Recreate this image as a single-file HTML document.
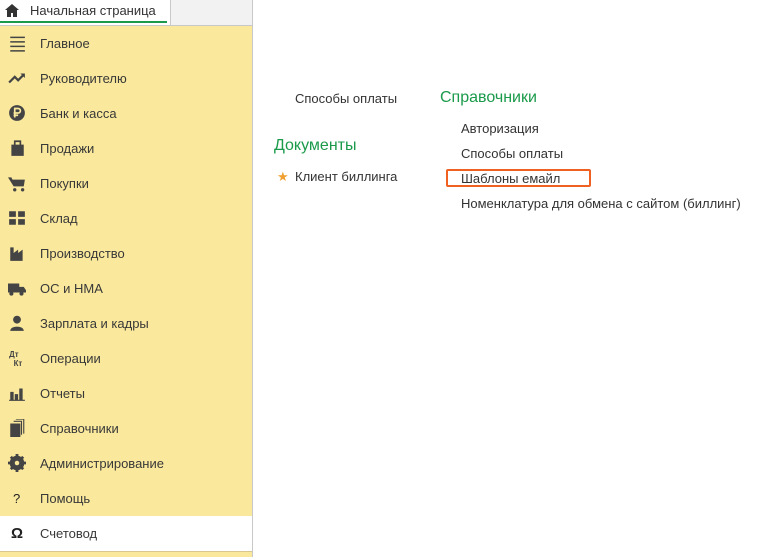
<!DOCTYPE html>
<html><head><meta charset="utf-8"><style>
*{margin:0;padding:0;box-sizing:border-box}
body{width:772px;height:557px;background:#fff;font-family:"Liberation Sans",sans-serif;font-size:13px;color:#404040;position:relative;overflow:hidden}
.top{position:absolute;left:0;top:0;width:253px;height:26px;background:#f2f2f2;border-bottom:1px solid #c8c8c8;border-right:1px solid #c8c8c8}
.tab{position:absolute;left:0;top:0;width:171px;height:25px;background:#fff;border-right:1px solid #c8c8c8}
.tab .line{position:absolute;left:0;right:3px;top:21px;height:2px;background:#1a9a4a}
.tab span{position:absolute;left:30px;top:3px;font-size:13px;color:#333}
.side{position:absolute;left:0;top:26px;width:253px;height:531px;background:#fae99d;border-right:1px solid #c8c8c8}
.it{position:absolute;left:0;width:252px;height:35px}
.it span{position:absolute;left:40px;top:10px;color:#383838}
.it svg{position:absolute;left:8px;top:8px}
.act{background:#fff}
.bot{position:absolute;left:0;top:551px;width:252px;height:1px;background:#d8c890}
.g{color:#1a9a4a;font-size:16px;position:absolute}
.t{position:absolute;color:#333}
</style></head><body>
<div class="top"><div class="tab"><svg style="position:absolute;left:5px;top:4px" width="14" height="13" viewBox="0 0 14 13"><path d="M7 0L0 6h2v7h4V9h2v4h4V6h2z" fill="#333"/></svg><span>Начальная страница</span><div class="line"></div></div></div>
<div class="side">
<div class="it" style="top:0"><svg width="18" height="18" viewBox="0 0 16 16"><path d="M2 3h13M2 7h13M2 11h13M2 15h13" stroke="#444" stroke-width="1.3"/></svg><span>Главное</span></div>
<div class="it" style="top:35px"><svg width="18" height="18" viewBox="0 0 16 16"><path d="M1 12l5-5 3 3 5-5" stroke="#444" stroke-width="2" fill="none"/><path d="M11 4h4v4z" fill="#444"/></svg><span>Руководителю</span></div>
<div class="it" style="top:70px"><svg width="18" height="18" viewBox="0 0 16 16"><circle cx="8" cy="8" r="7" fill="#444"/><path d="M6 12V4h3a2 2 0 010 4H5M5 10h4" stroke="#fae99d" stroke-width="1.5" fill="none"/></svg><span>Банк и касса</span></div>
<div class="it" style="top:105px"><svg width="18" height="18" viewBox="0 0 16 16"><rect x="3" y="5" width="11" height="10" fill="#444"/><path d="M6 6V2h5v4" stroke="#444" stroke-width="1.5" fill="none"/></svg><span>Продажи</span></div>
<div class="it" style="top:140px"><svg width="18" height="18" viewBox="0 0 16 16"><path d="M0 3h3l1 2h11l-1 6H5z" fill="#444"/><circle cx="6" cy="14" r="1.5" fill="#444"/><circle cx="13" cy="14" r="1.5" fill="#444"/></svg><span>Покупки</span></div>
<div class="it" style="top:175px"><svg width="18" height="18" viewBox="0 0 16 16"><path d="M1 2h6v5H1zM9 2h6v5H9zM1 9h6v5H1zM9 9h6v5H9z" fill="#444"/></svg><span>Склад</span></div>
<div class="it" style="top:210px"><svg width="18" height="18" viewBox="0 0 16 16"><path d="M2 15V3h3v5l4-3v3l4-3v10z" fill="#444"/></svg><span>Производство</span></div>
<div class="it" style="top:245px"><svg width="18" height="18" viewBox="0 0 16 16"><path d="M0 4h10v8H0zM10 7h4l2 3v2h-6z" fill="#444"/><circle cx="3" cy="13" r="1.8" fill="#444"/><circle cx="12" cy="13" r="1.8" fill="#444"/></svg><span>ОС и НМА</span></div>
<div class="it" style="top:280px"><svg width="18" height="18" viewBox="0 0 16 16"><circle cx="8" cy="5" r="3.5" fill="#444"/><path d="M2 15c0-5 12-5 12 0z" fill="#444"/></svg><span>Зарплата и кадры</span></div>
<div class="it" style="top:315px"><svg width="18" height="18" viewBox="0 0 16 16"><text x="1" y="7" font-size="7" font-weight="bold" fill="#444" font-family="Liberation Sans">Дт</text><text x="5" y="15" font-size="7" font-weight="bold" fill="#444" font-family="Liberation Sans">Кт</text></svg><span>Операции</span></div>
<div class="it" style="top:350px"><svg width="18" height="18" viewBox="0 0 16 16"><path d="M2 7h3v7H2zM6 9h3v5H6zM10 4h3v10h-3zM1 14h14v1H1z" fill="#444"/></svg><span>Отчеты</span></div>
<div class="it" style="top:385px"><svg width="18" height="18" viewBox="0 0 16 16"><rect x="2" y="4" width="9" height="12" fill="#444"/><path d="M12 14V2H5M14 13V0H7" stroke="#444" fill="none"/></svg><span>Справочники</span></div>
<div class="it" style="top:420px"><svg width="18" height="18" viewBox="0 0 16 16"><circle cx="8" cy="8" r="5" fill="none" stroke="#444" stroke-width="3"/><path d="M8 0v16M0 8h16M2.5 2.5l11 11M13.5 2.5l-11 11" stroke="#444" stroke-width="2.5"/><circle cx="8" cy="8" r="2" fill="#fae99d"/></svg><span>Администрирование</span></div>
<div class="it" style="top:455px"><span style="left:13px;color:#222">?</span><span>Помощь</span></div>
<div class="it act" style="top:490px"><span style="left:11px;font-weight:bold;font-size:15px;top:9px;color:#222">Ω</span><span>Счетовод</span></div>
</div>
<div class="bot"></div>
<div class="t" style="left:295px;top:91px">Способы оплаты</div>
<div class="g" style="left:274px;top:137px">Документы</div>
<div class="t" style="left:277px;top:169px;color:#f0a030">★</div>
<div class="t" style="left:295px;top:169px">Клиент биллинга</div>
<div class="g" style="left:440px;top:89px">Справочники</div>
<div class="t" style="left:461px;top:121px">Авторизация</div>
<div class="t" style="left:461px;top:146px">Способы оплаты</div>
<div style="position:absolute;left:446px;top:169px;width:145px;height:18px;border:2px solid #f06020;border-radius:2px"></div>
<div class="t" style="left:461px;top:171px">Шаблоны емайл</div>
<div class="t" style="left:461px;top:196px">Номенклатура для обмена с сайтом (биллинг)</div>
</body></html>
